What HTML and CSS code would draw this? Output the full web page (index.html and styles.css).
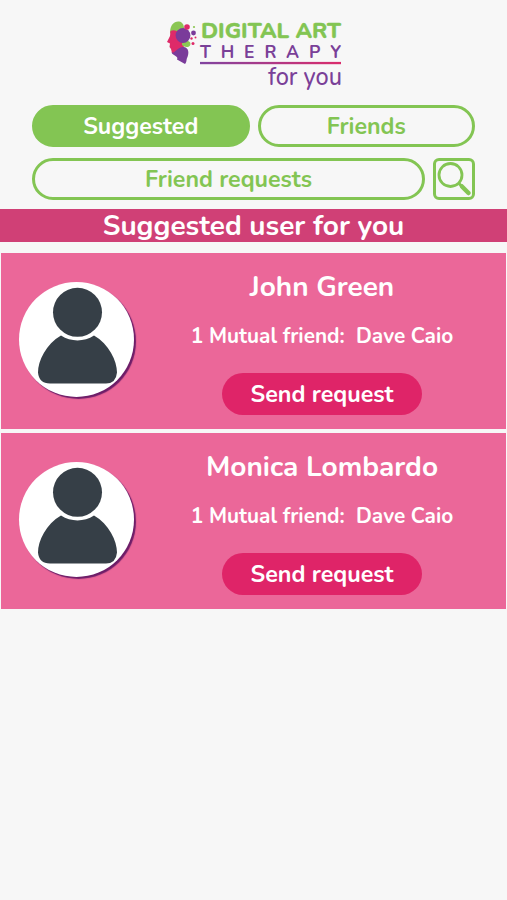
FILE: index.html
```
<!DOCTYPE html>
<html lang="en">
<head>
  <meta charset="UTF-8">
  <title>Digital Art Therapy for you</title>
  <meta name="viewport" content="width=device-width, initial-scale=1.0">
  <link rel="stylesheet" href="styles.css">
</head>
<body>
  <header class="header">
    <svg class="logo" viewBox="160 14 190 84">
      <defs>
        <linearGradient id="line" gradientUnits="userSpaceOnUse" x1="200" y1="0" x2="341" y2="0">
          <stop offset="0" stop-color="#8044a0"/>
          <stop offset="1" stop-color="#db2c6c"/>
        </linearGradient>
      </defs>
      <!-- head -->
      <path d="M170 33C170 25 174 21 179 21.500C183 22 184.500 26 184 31L176 38Z" fill="#8bc653"/>
      <path d="M170.500 31C176 28 181 34 183 39L184 48C181 53 176 53.500 172 53L171 49L169.500 47L170 43.500L167 42L170 36Z" fill="#de2a69"/>
      <path d="M182 43C187 39 192 42 190 45.500C188 48 184 47 182 45Z" fill="#8bc653"/>
      <path d="M171.500 52.500C176 53 178 46 184 47C189 48 189 53 187.500 57C186 60 187 62 185 64L177 59.500C179 56 173 56 171.500 52.500Z" fill="#7a3b9a"/>
      <circle cx="183" cy="35.500" r="7.400" fill="#7a3b9a"/>
      <circle cx="187" cy="27" r="2.800" fill="#de2a69"/>
      <circle cx="193.500" cy="33" r="2.400" fill="#7a3b9a"/>
      <circle cx="194" cy="27" r="1.100" fill="#8bc653"/>
      <circle cx="191.500" cy="38.500" r="1.200" fill="#de2a69"/>
      <circle cx="195.500" cy="37.500" r="1" fill="#de2a69"/>
      <circle cx="193" cy="43.500" r="1.500" fill="#de2a69"/>
      <text class="logo-digital" x="201" y="38" textLength="140" lengthAdjust="spacingAndGlyphs">DIGITAL ART</text>
      <text class="logo-therapy" x="200" y="58" textLength="141">THERAPY</text>
      <rect x="200" y="61.900" width="141" height="2.300" fill="url(#line)"/>
      <text class="logo-you" x="268" y="85" textLength="74" lengthAdjust="spacingAndGlyphs">for you</text>
    </svg>
  </header>

  <nav class="tabs">
    <div class="tabs-row">
      <button class="tab active">Suggested</button>
      <button class="tab">Friends</button>
    </div>
    <div class="tabs-row">
      <button class="tab">Friend requests</button>
      <button class="search-btn" aria-label="Search">
        <svg width="36" height="36" viewBox="0 0 36 36" fill="none" stroke="#83c553">
          <circle cx="14.500" cy="14" r="11.500" stroke-width="2.800"/>
          <path d="M22.500 22L26 25.500" stroke-width="3"/>
          <path d="M26 25.500L32.500 32" stroke-width="4.500" stroke-linecap="round"/>
        </svg>
      </button>
    </div>
  </nav>

  <h1 class="banner">Suggested user for you</h1>

  <main class="users">
    <div class="user-card">
      <div class="avatar">
        <svg viewBox="0 0 115 115">
          <path d="M42 53.500C27 62 19 79 19 90.500Q20 101.500 31 101.500H87Q97 101.500 98 90.500C98 79 90 62 75 53.500C65 60 52 60 42 53.500Z" fill="#363f47"/>
          <circle cx="58.500" cy="30.300" r="24.500" fill="#363f47"/>
        </svg>
      </div>
      <div class="user-info">
        <h2 class="user-name">John Green</h2>
        <p class="mutual">1 Mutual friend:&nbsp; Dave Caio</p>
        <button class="send-btn">Send request</button>
      </div>
    </div>
    <div class="user-card">
      <div class="avatar">
        <svg viewBox="0 0 115 115">
          <path d="M42 53.500C27 62 19 79 19 90.500Q20 101.500 31 101.500H87Q97 101.500 98 90.500C98 79 90 62 75 53.500C65 60 52 60 42 53.500Z" fill="#363f47"/>
          <circle cx="58.500" cy="30.300" r="24.500" fill="#363f47"/>
        </svg>
      </div>
      <div class="user-info">
        <h2 class="user-name">Monica Lombardo</h2>
        <p class="mutual">1 Mutual friend:&nbsp; Dave Caio</p>
        <button class="send-btn">Send request</button>
      </div>
    </div>
  </main>
</body>
</html>
```
FILE: styles.css
```
* {
  box-sizing: border-box;
}
body {
  margin: 0;
  background: #f7f7f7;
  font-family: Nunito, Lato, "Open Sans", sans-serif;
}
button {
  font-family: inherit;
  cursor: pointer;
}
.header {
  height: 105px;
  padding-top: 14px;
  display: flex;
  justify-content: center;
}
.logo {
  width: 190px;
  height: 84px;
  margin-left: 3px;
}
.logo-digital {
  font-size: 22px;
  font-weight: 800;
  fill: #83c553;
  stroke: #83c553;
  stroke-width: 0.3px;
}
.logo-therapy {
  font-size: 17.5px;
  font-weight: 700;
  fill: #7a4098;
}
.logo-you {
  font-size: 25px;
  font-weight: 500;
  fill: #7a4098;
}
.tabs {
  padding: 0 32px;
  display: flex;
  flex-direction: column;
  gap: 11px;
}
.tabs-row {
  display: flex;
  gap: 8px;
}
.tab {
  flex: 1;
  height: 42px;
  padding: 1px 0 0;
  border: 3px solid #83c553;
  border-radius: 21px;
  background: transparent;
  color: #83c553;
  font-size: 23.2px;
  font-weight: 700;
}
.tab.active {
  background: #83c553;
  color: #fff;
}
.search-btn {
  width: 42px;
  height: 42px;
  padding: 0;
  border: 3px solid #83c553;
  border-radius: 6px;
  background: transparent;
  display: flex;
  align-items: center;
  justify-content: center;
}
.banner {
  margin: 9px 0 0;
  height: 33px;
  line-height: 34px;
  background: #d04076;
  color: #fff;
  font-size: 28px;
  font-weight: 700;
  text-align: center;
}
.users {
  margin-top: 11px;
  padding: 0 1px;
  display: flex;
  flex-direction: column;
  gap: 4px;
}
.user-card {
  height: 176px;
  display: flex;
  background: #eb6799;
}
.avatar {
  width: 115px;
  height: 115px;
  margin: 29px 0 0 18px;
  border-radius: 50%;
  background: #fff;
  box-shadow: 2px 2px 1px #6d1d68;
}
.user-info {
  flex: 1;
  padding: 18px 0 0;
  margin-left: 4px;
  display: flex;
  flex-direction: column;
  align-items: center;
  color: #fff;
}
.user-name {
  margin: 0;
  font-size: 28px;
  line-height: 33px;
  font-weight: 700;
}
.mutual {
  margin: 18px 0 0;
  font-size: 20.8px;
  line-height: 28px;
  font-weight: 700;
}
.send-btn {
  width: 200px;
  height: 42px;
  margin-top: 23px;
  padding: 0 0 1px;
  border: none;
  border-radius: 21px;
  background: #df2468;
  color: #fff;
  font-size: 23.3px;
  font-weight: 700;
}
```
